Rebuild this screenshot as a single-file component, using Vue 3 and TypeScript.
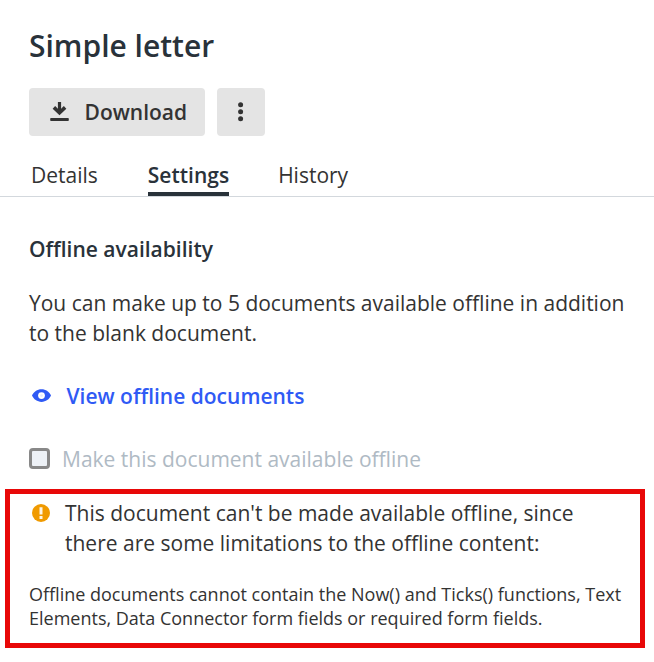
<script setup lang="ts">
import { ref } from 'vue'

const tabs: string[] = ['Details', 'Settings', 'History']
const active = ref<string>('Settings')
</script>

<template>
  <main class="page">
    <header class="head">
      <h1>Simple letter</h1>
      <div class="actions">
        <button class="btn download">
          <svg width="20" height="20" viewBox="0 0 20 20">
            <path d="M9.500 0v10" stroke="currentColor" stroke-width="3.200" />
            <path d="M3.900 5.400L9.500 10.700l5.600-5.300" fill="none" stroke="currentColor" stroke-width="3.600" />
            <path d="M1 16h17a.8.8 0 0 1 .8.8v1.400a.8.8 0 0 1-.8.8H1a.8.8 0 0 1-.8-.8v-1.400A.8.8 0 0 1 1 16z" fill="currentColor" />
          </svg>
          <span>Download</span>
        </button>
        <button class="btn more" aria-label="More">
          <svg width="6" height="20" viewBox="0 0 6 20" fill="currentColor">
            <circle cx="2.600" cy="2.700" r="2.500" /><circle cx="2.600" cy="9.800" r="2.500" /><circle cx="2.600" cy="16.800" r="2.500" />
          </svg>
        </button>
      </div>
    </header>
    <nav class="tabs">
      <button v-for="t in tabs" :key="t" class="tab" :class="{ active: t === active }" @click="active = t">{{ t }}</button>
    </nav>
    <section class="content">
      <h2>Offline availability</h2>
      <p class="intro">You can make up to 5 documents available offline in addition<br />to the blank document.</p>
      <a class="view">
        <svg width="19" height="14" viewBox="0 0 19 14">
          <path fill="currentColor" d="M9.500 0.300C5.200 0.300 1.600 2.800 0 6.600c1.600 3.800 5.200 6.300 9.500 6.300S17.400 10.400 19 6.600C17.400 2.800 13.800 0.300 9.500 0.300Z" />
          <circle cx="9.500" cy="6.600" r="3.400" fill="#fff" />
          <circle cx="9.500" cy="6.600" r="1.400" fill="currentColor" fill-opacity=".12" />
        </svg>
        <span>View offline documents</span>
      </a>
      <label class="check"><span class="box"></span><span>Make this document available offline</span></label>
    </section>
    <section class="notice">
      <div class="warn">
        <svg width="18" height="18" viewBox="0 0 18 18">
          <circle cx="9" cy="9" r="9" fill="#f09a00" />
          <path d="M9 3.200v7.200M9 12v3" stroke="#fff" stroke-width="3" stroke-opacity=".9" />
        </svg>
        <p>This document can't be made available offline, since<br />there are some limitations to the offline content:</p>
      </div>
      <p class="small">Offline documents cannot contain the Now() and Ticks() functions, Text<br />Elements, Data Connector form fields or required form fields.</p>
    </section>
  </main>
</template>

<style>
body { margin: 0; background: #fff; }
</style>

<style scoped>
.page { box-sizing: border-box; width: 654px; height: 662px; overflow: hidden; font-family: "Open Sans", sans-serif; color: #333; font-size: 21px; line-height: 30px; white-space: nowrap; }
h1, h2, p { margin: 0; }
.head { padding: 26px 29px 0; }
h1 { font-size: 30px; line-height: 40px; font-weight: 600; color: #29323a; }
.actions { display: flex; gap: 12px; margin-top: 22px; }
.btn { box-sizing: border-box; height: 48px; border: 0; border-radius: 4px; padding: 0; background: #e4e4e4; color: #333; font: 600 21px/30px "Open Sans", sans-serif; display: flex; align-items: center; }
.download { width: 176px; padding-left: 21px; gap: 14.500px; }
.more { width: 48px; justify-content: center; }
.tabs { display: flex; height: 60px; border-bottom: 1px solid #d3d8dd; padding-left: 31px; gap: 50px; }
.tab { box-sizing: border-box; height: 60px; padding: 22px 0 0; border: 0; border-bottom: 4px solid transparent; background: none; color: #333; font: 400 21px/30px "Open Sans", sans-serif; display: block; }
.tab.active { font-weight: 600; color: #29323a; border-color: #29323a; }
.tab:last-child { margin-left: -1px; }
.content { padding: 37px 29px 0; }
h2 { font-size: 21px; line-height: 30px; font-weight: 600; color: #29323a; }
.intro { margin-top: 24px; }
.view { display: flex; align-items: center; margin: 33px 0 0 3px; gap: 15.500px; color: #2f5af5; font-weight: 600; }
.check { display: flex; align-items: center; margin-top: 33px; gap: 12px; color: #afbac4; }
.box { box-sizing: border-box; width: 21px; height: 21px; margin-bottom: 2px; border: 3px solid #888; border-radius: 4px; background: #edf1f6; }
.notice { box-sizing: border-box; margin: 15px 0 0 5px; width: 640px; height: 159px; border: 5px solid #e80808; padding: 4px 0 0 19px; }
.warn { display: flex; gap: 15px; padding-left: 3px; }
.warn svg { margin-top: 6px; }
.small { font-size: 18px; line-height: 24px; margin-top: 24px; }
</style>
